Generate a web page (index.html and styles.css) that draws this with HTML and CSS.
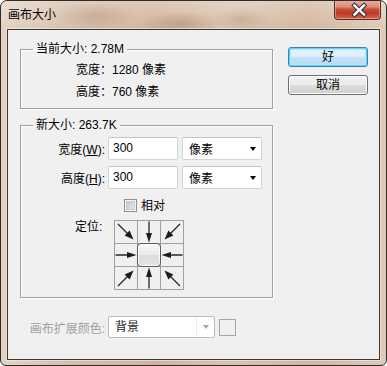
FILE: index.html
```html
<!DOCTYPE html>
<html lang="zh-CN">
<head>
<meta charset="utf-8">
<title>画布大小</title>
<link rel="stylesheet" href="styles.css">
</head>
<body>
<svg width="0" height="0" class="defs">
  <defs>
    <symbol id="ar" viewBox="0 0 22 22">
      <line x1="0.5" y1="11" x2="14" y2="11" stroke="#262626" stroke-width="1.3"/>
      <polygon points="12,8 21.5,11 12,14" fill="#1c1c1c"/>
    </symbol>
    <symbol id="ad" viewBox="0 0 22 22">
      <line x1="3" y1="3" x2="14" y2="14" stroke="#262626" stroke-width="1.3"/>
      <polygon points="18.5,18.5 14.6,9.6 9.6,14.6" fill="#1c1c1c"/>
    </symbol>
  </defs>
</svg>
<div class="window">
  <div class="titlebar">
    <span class="title">画布大小</span>
    <div class="close">
      <svg width="47" height="20" viewBox="0 0 47 20">
        <path d="M19.5 5.5 L29 14.5 M29 5.5 L19.5 14.5" stroke="#3a3b4c" stroke-width="4.6" stroke-linecap="square"/>
        <path d="M19.5 5.5 L29 14.5 M29 5.5 L19.5 14.5" stroke="#ffffff" stroke-width="2.4" stroke-linecap="square"/>
      </svg>
    </div>
  </div>
  <div class="client">
    <div class="main">
      <div class="left">
        <fieldset class="group g1">
          <legend>当前大小: 2.78M</legend>
          <div class="info">宽度：1280 像素</div>
          <div class="info">高度：760 像素</div>
        </fieldset>
        <fieldset class="group g2">
          <legend>新大小: 263.7K</legend>
          <div class="frow">
            <span class="flabel">宽度(<u>W</u>):</span>
            <span class="field">300</span>
            <span class="combo"><span>像素</span><i class="tri"></i></span>
          </div>
          <div class="frow r2">
            <span class="flabel">高度(<u>H</u>):</span>
            <span class="field">300</span>
            <span class="combo"><span>像素</span><i class="tri"></i></span>
          </div>
          <div class="checkrow">
            <span class="checkbox"></span><span class="ctext">相对</span>
          </div>
          <div class="anchorrow">
            <span class="alabel">定位:</span>
            <div class="grid">
              <div class="cell"><svg><use href="#ad"/></svg></div>
              <div class="cell"><svg class="r90"><use href="#ar"/></svg></div>
              <div class="cell"><svg class="r90"><use href="#ad"/></svg></div>
              <div class="cell"><svg><use href="#ar"/></svg></div>
              <div class="cell center"><div class="knob"></div></div>
              <div class="cell"><svg class="r180"><use href="#ar"/></svg></div>
              <div class="cell"><svg class="r270"><use href="#ad"/></svg></div>
              <div class="cell"><svg class="r270"><use href="#ar"/></svg></div>
              <div class="cell"><svg class="r180"><use href="#ad"/></svg></div>
            </div>
          </div>
        </fieldset>
      </div>
      <div class="buttons">
        <div class="btn default">好</div>
        <div class="btn">取消</div>
      </div>
    </div>
    <div class="extrow">
      <span class="flabel disabled">画布扩展颜色:</span>
      <span class="dcombo"><span class="dtext">背景</span><i class="dtri"></i></span>
      <span class="swatch"></span>
    </div>
  </div>
</div>
</body>
</html>
```

FILE: styles.css
```css
* { box-sizing: border-box; }
html, body { margin: 0; padding: 0; }
body {
  width: 387px;
  height: 366px;
  overflow: hidden;
  background: #ffffff;
  font-family: "Liberation Sans", "Noto Sans CJK SC", sans-serif;
  font-size: 12px;
  color: #000;
}
.defs { position: absolute; }

.window {
  width: 387px;
  height: 366px;
  border: 1px solid #2f2b28;
  border-radius: 7px 7px 6px 6px;
  overflow: hidden;
  display: flex;
  flex-direction: column;
  background:
    linear-gradient(to bottom, rgba(255,255,255,0.28), rgba(255,255,255,0) 28px),
    radial-gradient(ellipse 40px 14px at 95px 14px, rgba(150,115,90,0.35), rgba(150,115,90,0) 100%),
    radial-gradient(ellipse 40px 12px at 180px 22px, rgba(140,105,80,0.35), rgba(140,105,80,0) 100%),
    radial-gradient(ellipse 30px 12px at 240px 18px, rgba(150,115,90,0.3), rgba(150,115,90,0) 100%),
    linear-gradient(to right, #e4d3c4 0%, #d7bea9 18%, #d2b49d 40%, #dcc3ae 60%, #d3b69f 80%, #dfcab8 100%);
}

.titlebar {
  height: 28px;
  display: flex;
  justify-content: space-between;
  align-items: flex-start;
}
.title {
  margin: 7px 0 0 7px;
  line-height: 14px;
  font-size: 12px;
  color: #000;
}
.close {
  width: 47px;
  height: 20px;
  margin: -1px 5px 0 0;
  border: 1px solid #5a2d25;
  border-top: none;
  border-radius: 0 0 4px 4px;
  background: linear-gradient(to bottom, #eab0a1 0%, #dd8c78 35%, #c64b36 50%, #bf3a24 70%, #d4664b 100%);
  box-shadow: inset 0 0 0 1px rgba(255,210,200,0.45);
}
.close svg { display: block; }

.client {
  margin: 0 6px;
  height: 331px;
  border: 1px solid #3a3632;
  background: #f0f0f0;
  padding: 12px 11px 0 12px;
  box-shadow: 0 0 0 1px rgba(255,255,255,0.45);
}

.main { display: flex; gap: 15px; }
.left { width: 253px; }

.group {
  margin: 0;
  padding: 0;
  border: 1px solid #a0a0a0;
  box-shadow: inset 1px 1px 0 #fff, 1px 1px 0 #fff;
  min-width: 0;
}
.group legend {
  margin-left: 12px;
  padding: 0 3px;
  line-height: 14px;
  font-size: 12px;
}
.g1 { padding: 3px 0 5px 0; }
.info { line-height: 22px; height: 22px; padding-left: 55px; }

.g2 { margin-top: 9px; padding: 5px 0 7px 0; }
.frow { display: flex; align-items: center; height: 23px; }
.frow.r2 { margin-top: 6px; }
.flabel {
  width: 84px;
  margin-right: 3px;
  text-align: right;
  white-space: nowrap;
}
.field {
  width: 70px;
  height: 23px;
  border: 1px solid #d4d4d4;
  border-top-color: #c2c2c2;
  border-radius: 2px;
  background: #fff;
  padding-left: 4px;
  line-height: 21px;
}
.combo {
  width: 80px;
  height: 23px;
  margin-left: 4px;
  border: 1px solid #d4d4d4;
  border-top-color: #c2c2c2;
  border-radius: 2px;
  background: #fff;
  padding: 0 5px 0 6px;
  display: flex;
  align-items: center;
  justify-content: space-between;
}
.tri {
  width: 0;
  height: 0;
  border-left: 3.5px solid transparent;
  border-right: 3.5px solid transparent;
  border-top: 4px solid #000;
}

.checkrow {
  margin-top: 10px;
  margin-left: 103px;
  display: flex;
  align-items: center;
  height: 13px;
}
.checkbox {
  width: 13px;
  height: 13px;
  border: 1px solid #8e8f8f;
  background: linear-gradient(135deg, #b8bcc2, #f2f2f2);
  box-shadow: inset 0 0 0 1px #f4f4f4, inset 0 0 0 2px #c8ccd1;
}
.ctext { margin-left: 4px; line-height: 14px; }

.anchorrow {
  margin-top: 8px;
  display: flex;
  align-items: flex-start;
}
.alabel {
  margin-left: 54px;
  width: 39px;
  line-height: 14px;
  margin-top: 0;
}
.grid {
  display: grid;
  grid-template-columns: repeat(3, 22px);
  grid-template-rows: repeat(3, 22px);
  gap: 1px;
  padding: 1px;
  background: #a0a0a0;
  width: 70px;
  height: 70px;
}
.cell { background: #f0f0f0; }
.cell svg { width: 22px; height: 22px; display: block; }
.r90 { transform: rotate(90deg); }
.r180 { transform: rotate(180deg); }
.r270 { transform: rotate(270deg); }
.knob {
  margin: -1px;
  width: 24px;
  height: 24px;
  border: 1px solid #5e5e5e;
  border-radius: 4px;
  background: linear-gradient(to bottom, #f6f6f6 0%, #ececec 50%, #dddddd 51%, #e4e4e4 100%);
  box-shadow: inset 0 0 0 1px #fafafa;
}

.buttons { display: flex; flex-direction: column; gap: 8px; padding-top: 5px; }
.btn {
  width: 80px;
  height: 20px;
  border: 1px solid #707070;
  border-radius: 3px;
  background: linear-gradient(to bottom, #f2f2f2 0%, #ebebeb 50%, #dddddd 51%, #cfcfcf 100%);
  box-shadow: inset 0 0 0 1px #fbfbfb;
  display: flex;
  align-items: center;
  justify-content: center;
  line-height: 14px;
}
.btn.default {
  border-color: #3c7fb1;
  background: linear-gradient(to bottom, #e8f5fc 0%, #d9eefa 50%, #c4e4f7 51%, #b3daf2 100%);
  box-shadow: inset 0 0 0 1px #5fd3fa, inset 0 0 0 2px #b5e6fb;
}

.extrow {
  margin-top: 18px;
  padding-left: 1px;
  display: flex;
  align-items: center;
  height: 22px;
}
.disabled { color: #a0a0a0; }
.dcombo {
  width: 107px;
  height: 22px;
  border: 1px solid #bcbcbc;
  border-radius: 2px;
  background: #fff;
  display: flex;
  align-items: center;
}
.dtext {
  width: 87px;
  height: 18px;
  margin-left: 1px;
  padding-left: 5px;
  line-height: 18px;
  color: #2a2a2a;
  border-right: 1px solid #ececec;
}
.dtri {
  margin-left: 6px;
  width: 0;
  height: 0;
  border-left: 3.5px solid transparent;
  border-right: 3.5px solid transparent;
  border-top: 4px solid #a8a8a8;
}
.swatch {
  width: 17px;
  height: 17px;
  margin-left: 4px;
  border: 1px solid #a6a6a6;
  background: #f0f0f0;
}
```
